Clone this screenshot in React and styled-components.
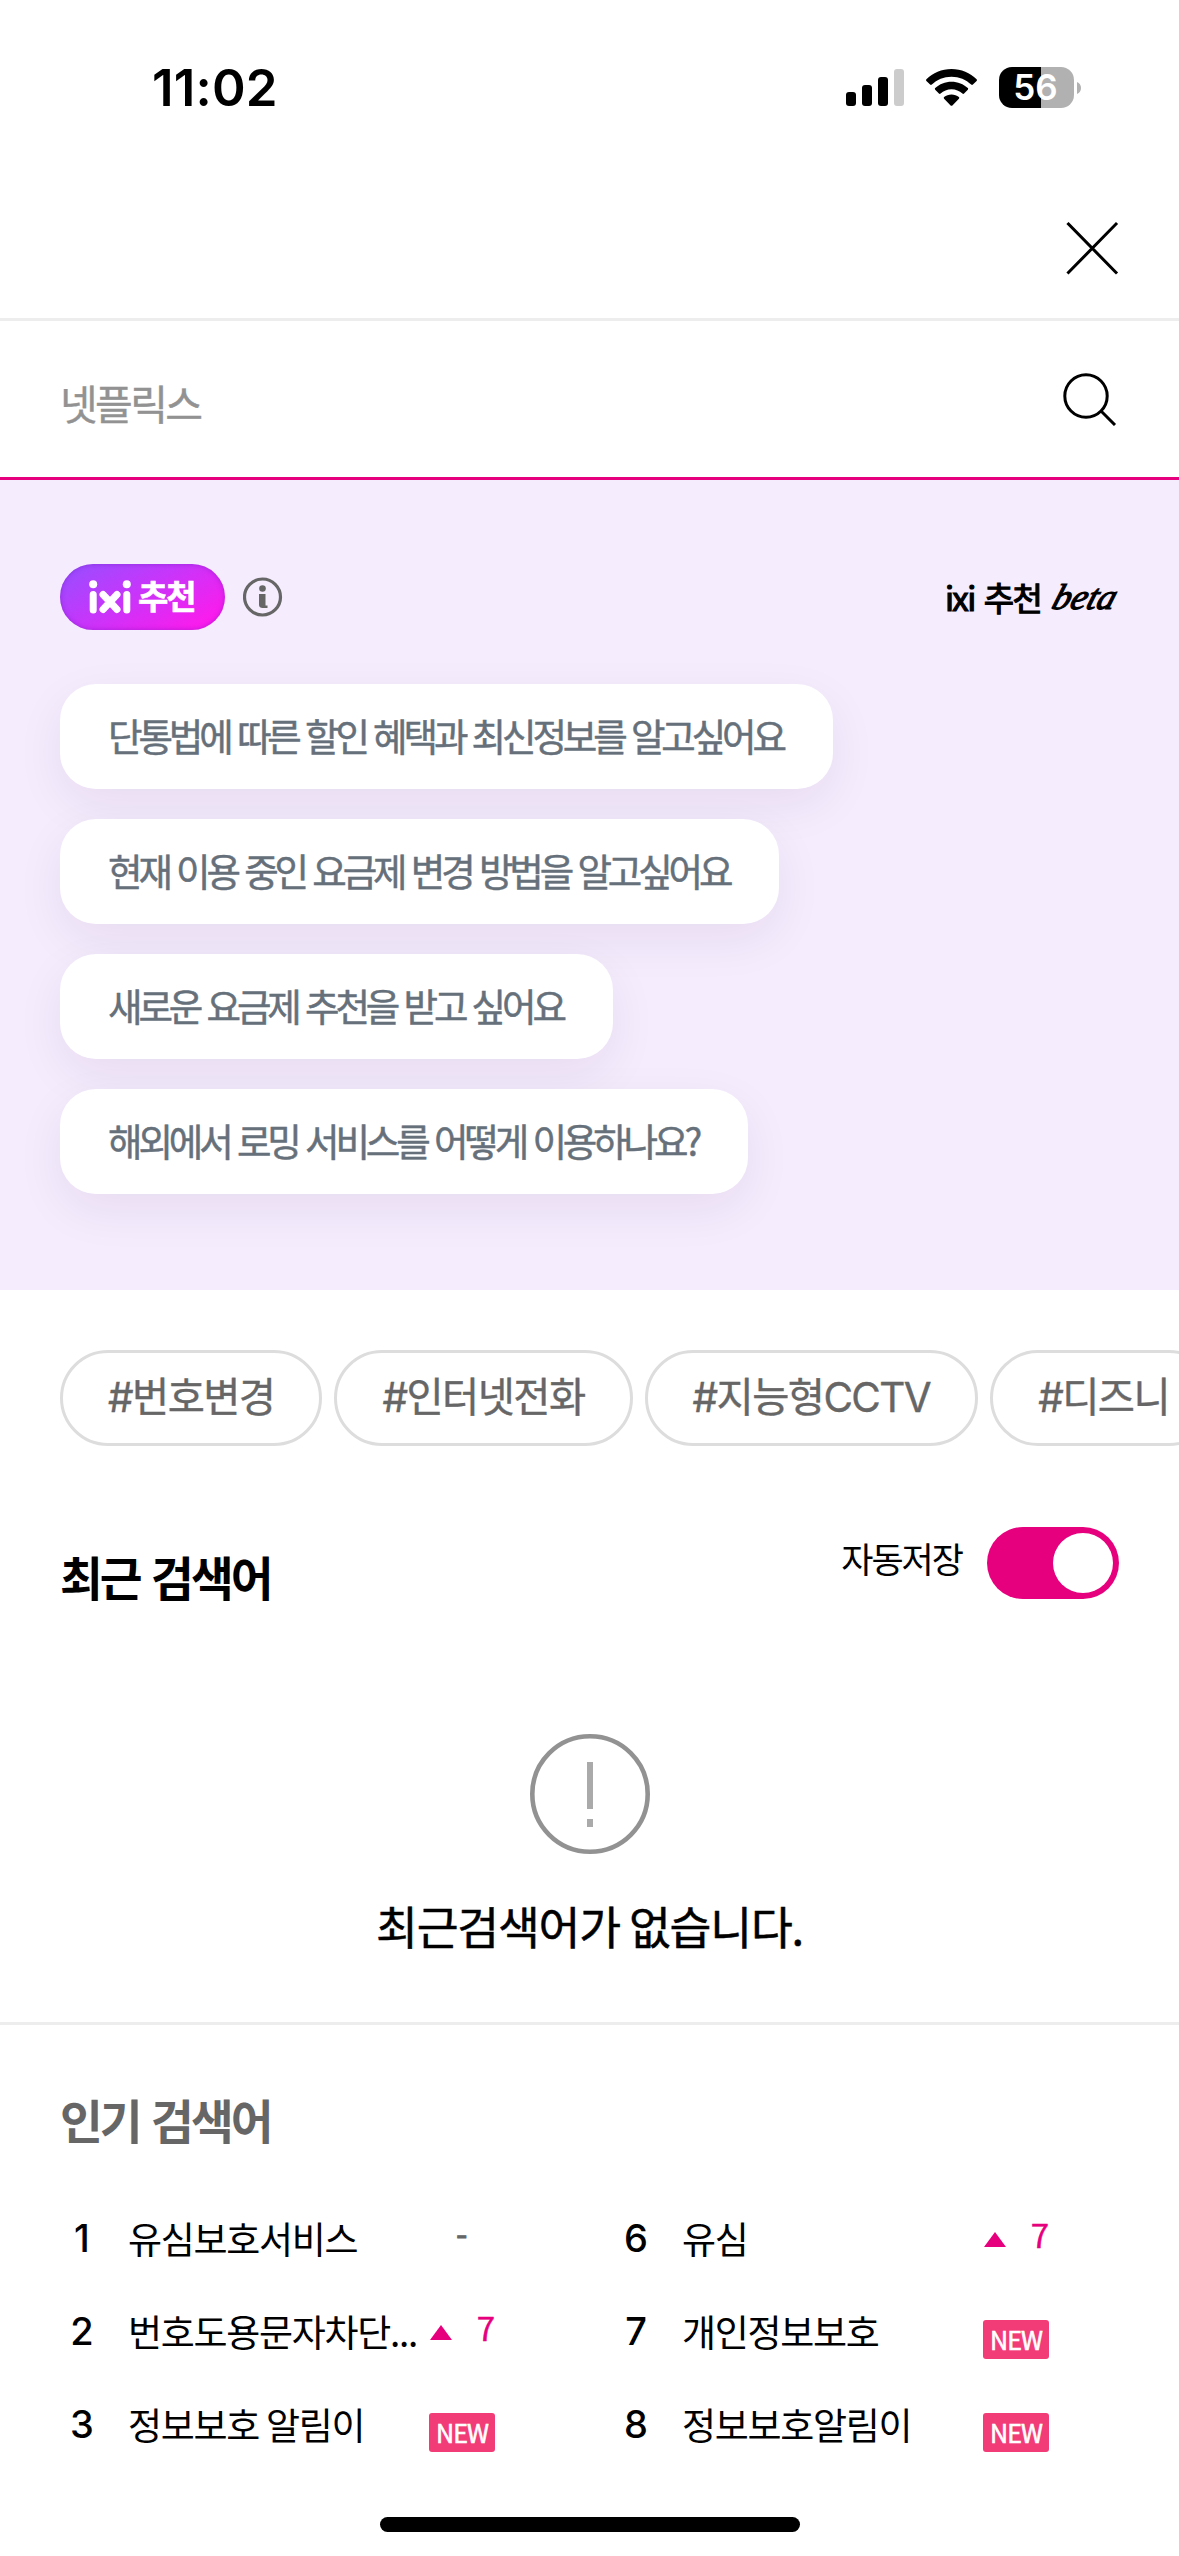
import { useState } from "react";
import styled, { createGlobalStyle } from "styled-components";

const COLORS = {
  Magenta: "#e6007e",
  Lavender: "#f5ecfe",
  Line: "#ededed",
  Grey: "#666666",
  Slate: "#66707a",
};

const questions = [
  "단통법에 따른 할인 혜택과 최신정보를 알고싶어요",
  "현재 이용 중인 요금제 변경 방법을 알고싶어요",
  "새로운 요금제 추천을 받고 싶어요",
  "해외에서 로밍 서비스를 어떻게 이용하나요?",
];

const tags = ["#번호변경", "#인터넷전화", "#지능형CCTV", "#디즈니"];

const popular = [
  { rank: 1, word: "유심보호서비스", state: "same" },
  { rank: 6, word: "유심", state: "up", step: 7 },
  { rank: 2, word: "번호도용문자차단...", state: "up", step: 7 },
  { rank: 7, word: "개인정보보호", state: "new" },
  { rank: 3, word: "정보보호 알림이", state: "new" },
  { rank: 8, word: "정보보호알림이", state: "new" },
];

const Change = ({ state, step }) => {
  if (state === "new") return <NewBadge>NEW</NewBadge>;
  if (state === "up") {
    return (
      <Up>
        <svg width="22" height="15" viewBox="0 0 22 15">
          <path d="M11 0L22 15H0z" fill={COLORS.Magenta} />
        </svg>
        <span>{step}</span>
      </Up>
    );
  }
  return <Same>-</Same>;
};

const StatusIcons = () => (
  <Icons>
    <svg width="58" height="37" viewBox="0 0 58 37">
      <rect x="0" y="23" width="10" height="14" rx="3" />
      <rect x="16" y="16" width="10" height="21" rx="3" />
      <rect x="32" y="8" width="10" height="29" rx="3" />
      <rect x="48" y="0" width="10" height="37" rx="3" fill="#cccccc" />
    </svg>
    <svg width="51" height="37" viewBox="0 0 51 37">
      <path d="M25.5 0C35.3 0 44.2 3.9 50.6 10.2c.5.5.5 1.2 0 1.7l-3.7 3.7c-.5.5-1.2.5-1.7 0C40.1 10.7 33.2 7.7 25.5 7.7S10.9 10.7 5.8 15.6c-.5.5-1.2.5-1.7 0L.4 11.9c-.5-.5-.5-1.2 0-1.7C6.8 3.9 15.7 0 25.5 0z" />
      <path d="M25.5 12.7c6.3 0 12 2.4 16.3 6.4.5.5.5 1.2 0 1.7l-3.7 3.7c-.5.5-1.2.5-1.7 0-2.9-2.6-6.7-4.2-10.9-4.2s-8 1.6-10.9 4.2c-.5.5-1.2.5-1.7 0l-3.7-3.7c-.5-.5-.5-1.2 0-1.7 4.3-4 10-6.4 16.3-6.4z" />
      <path d="M25.5 25.4c2.8 0 5.4 1 7.4 2.7.5.5.5 1.2 0 1.7l-6.5 6.6c-.5.5-1.3.5-1.8 0l-6.5-6.6c-.5-.5-.5-1.2 0-1.7 2-1.7 4.6-2.7 7.4-2.7z" />
    </svg>
    <Battery>
      <Level>56</Level>
      <svg width="4" height="12" viewBox="0 0 4 12">
        <path d="M0 0C2.5 1 4 3.3 4 6S2.5 11 0 12z" fill="#b1b1b1" />
      </svg>
    </Battery>
  </Icons>
);

const App = () => {
  const [autoSave, setAutoSave] = useState(true);

  return (
    <Screen>
      <GlobalStyle />
      <StatusBar>
        <Time>11:02</Time>
        <StatusIcons />
      </StatusBar>

      <Header>
        <IconButton aria-label="닫기">
          <svg width="54" height="54" viewBox="0 0 54 54" fill="none">
            <path d="M3.5 3L51 51.500M51 3L3.5 51.5" stroke="#000" strokeWidth="3" strokeLinecap="square" />
          </svg>
        </IconButton>
      </Header>

      <SearchBar>
        <Placeholder>넷플릭스</Placeholder>
        <IconButton aria-label="검색">
          <svg width="54" height="54" viewBox="0 0 54 54" fill="none" stroke="#000" strokeWidth="3">
            <circle cx="23" cy="24" r="21.2" />
            <path d="M38 39L52 53" />
          </svg>
        </IconButton>
      </SearchBar>

      <Recommend>
        <RecommendHead>
          <Badge>
            {/* ixi wordmark */}
            <svg width="42" height="34" viewBox="0 0 42 34" fill="#fff" stroke="#fff">
              <circle cx="4.2" cy="4.2" r="4" stroke="none" />
              <circle cx="37.8" cy="4.2" r="4" stroke="none" />
              <path d="M4.2 14.5V30M37.8 14.5V30M14 14.5L28 29.5M28 14.5L14 29.5" strokeWidth="7" strokeLinecap="round" />
            </svg>
            <span>추천</span>
          </Badge>
          <svg width="40" height="40" viewBox="0 0 40 40" fill="none">
            <circle cx="19.5" cy="20" r="18" stroke={COLORS.Grey} strokeWidth="3.2" />
            <circle cx="19.5" cy="11.5" r="3.3" fill={COLORS.Grey} />
            <path d="M16 17h6.5v11.5h2V31h-5c-2 0-3.5-1-3.5-3z" fill={COLORS.Grey} />
          </svg>
          <Beta>
            <span>ixi</span>
            <span>추천</span>
            <i>beta</i>
          </Beta>
        </RecommendHead>
        <Questions>
          {questions.map((question) => (
            <Question key={question}>{question}</Question>
          ))}
        </Questions>
      </Recommend>

      <Tags>
        {tags.map((tag) => (
          <Tag key={tag}>{tag}</Tag>
        ))}
      </Tags>

      <Recent>
        <RecentHead>
          <Title>최근 검색어</Title>
          <AutoSave>
            자동저장
            <Switch $on={autoSave} onClick={() => setAutoSave(!autoSave)} />
          </AutoSave>
        </RecentHead>
        <Empty>
          <svg width="120" height="120" viewBox="0 0 120 120" fill="none">
            <circle cx="60" cy="60" r="57.7" stroke="#929292" strokeWidth="4.6" />
            <path d="M57 28h6v47h-6zM57 85h6v8h-6z" fill="#aaaaaa" />
          </svg>
          <p>최근검색어가 없습니다.</p>
        </Empty>
      </Recent>

      <Popular>
        <Title $muted>인기 검색어</Title>
        <List>
          {popular.map(({ rank, word, state, step }) => (
            <Item key={rank}>
              <Rank>{rank}</Rank>
              <Word>{word}</Word>
              <Change state={state} step={step} />
            </Item>
          ))}
        </List>
      </Popular>

      <HomeBar />
    </Screen>
  );
};

export default App;

const GlobalStyle = createGlobalStyle`
  * {
    box-sizing: border-box;
  }

  body {
    margin: 0;
    background: #fff;
    overflow: hidden;
  }

  svg {
    display: block;
    flex-shrink: 0;
  }
`;

const Screen = styled.main`
  display: flex;
  flex-direction: column;
  width: 1179px;
  height: 2556px;
  overflow: hidden;
  background: #fff;
  color: #000;
  font-family: "Noto Sans CJK KR", sans-serif;
  white-space: nowrap;
`;

const StatusBar = styled.div`
  display: flex;
  justify-content: space-between;
  height: 178px;
  padding: 67px 98px 0 152px;
`;

const Time = styled.div`
  font: 600 51px/42px "Inter", sans-serif;
  letter-spacing: 0.2px;
`;

const Icons = styled.div`
  display: flex;
  align-items: center;
  gap: 22px;
  height: 41px;
`;

const Battery = styled.div`
  display: flex;
  align-items: center;
  gap: 3px;
`;

const Level = styled.div`
  width: 75px;
  height: 41px;
  padding-right: 2px;
  border-radius: 13px;
  background: linear-gradient(90deg, #000 56%, #b1b1b1 56%);
  color: #fff;
  font: 600 35px/41px "Inter", sans-serif;
  text-align: center;
`;

const Header = styled.header`
  display: flex;
  justify-content: flex-end;
  height: 143px;
  padding: 43px 60px 0;
  border-bottom: 3px solid ${COLORS.Line};
`;

const IconButton = styled.button`
  padding: 0;
  border: 0;
  background: none;
  height: 54px;
`;

const SearchBar = styled.div`
  display: flex;
  justify-content: space-between;
  height: 159px;
  padding: 51px 62px 0 60px;
  border-bottom: 3px solid ${COLORS.Magenta};
`;

const Placeholder = styled.div`
  color: #929292;
  font-size: 41px;
  line-height: 61px;
  letter-spacing: -2.6px;
  -webkit-text-stroke: 0.4px #929292;
`;

const Recommend = styled.section`
  height: 810px;
  padding: 84px 60px 0;
  background: ${COLORS.Lavender};
`;

const RecommendHead = styled.div`
  display: flex;
  align-items: center;
  gap: 18px;
  height: 66px;
`;

const Badge = styled.div`
  display: flex;
  align-items: center;
  gap: 7px;
  width: 165px;
  height: 66px;
  padding-left: 29px;
  border-radius: 33px;
  background: linear-gradient(150deg, #9a4dff 5%, #c437fb 42%, #fb1ced 88%);
  box-shadow: inset 0 0 5px rgba(110, 20, 190, 0.5);
  color: #fff;
  font-size: 33px;
  font-weight: 700;
  line-height: 62px;
  letter-spacing: -2.2px;
  -webkit-text-stroke: 0.6px #fff;

  span {
    height: 66px;
  }
`;

const Beta = styled.div`
  display: flex;
  gap: 9px;
  margin-left: auto;
  font-size: 33px;
  line-height: 63px;
  letter-spacing: -1.6px;
  -webkit-text-stroke: 1.2px #000;

  i {
    margin: 0 2px 0 4px;
    font-family: "Liberation Serif", serif;
    font-weight: 400;
    font-size: 36px;
    letter-spacing: 0.2px;
    transform: skewX(-18deg);
  }
`;

const Questions = styled.div`
  display: flex;
  flex-direction: column;
  align-items: flex-start;
  gap: 30px;
  margin-top: 54px;
`;

const Question = styled.div`
  height: 105px;
  padding: 0 50px 0 48px;
  border-radius: 36px;
  background: #fff;
  box-shadow: 0 16px 48px rgba(60, 20, 60, 0.07);
  color: ${COLORS.Slate};
  font-size: 37.5px;
  line-height: 101px;
  letter-spacing: -4.1px;
  word-spacing: 3px;
  -webkit-text-stroke: 0.5px ${COLORS.Slate};
`;

const Tags = styled.div`
  display: flex;
  gap: 12px;
  padding: 60px 0 0 60px;
  height: 156px;
`;

const Tag = styled.div`
  flex-shrink: 0;
  height: 96px;
  padding: 0 45px;
  border: 3px solid #dddddd;
  border-radius: 48px;
  color: ${COLORS.Grey};
  font-family: "Inter", "Noto Sans CJK KR", sans-serif;
  font-size: 40.4px;
  line-height: 90px;
  letter-spacing: -1.55px;
  -webkit-text-stroke: 0.4px ${COLORS.Grey};
`;

const Recent = styled.section`
  height: 579px;
  padding: 81px 60px 0;
  border-bottom: 3px solid ${COLORS.Line};
`;

const RecentHead = styled.div`
  display: flex;
  justify-content: space-between;
  height: 207px;
`;

const Title = styled.h2`
  margin: ${({ $muted }) => ($muted ? "0" : "16px 0 0")};
  color: ${({ $muted }) => ($muted ? COLORS.Grey : "#000")};
  font-size: 46.5px;
  font-weight: 700;
  line-height: 66px;
  letter-spacing: -3px;
  word-spacing: 4px;
`;

const AutoSave = styled.label`
  display: flex;
  gap: 25px;
  font-size: 35px;
  line-height: 62px;
  letter-spacing: -2px;
`;

const Switch = styled.button`
  width: 132px;
  height: 72px;
  padding: 6px;
  border: 0;
  border-radius: 36px;
  background: ${({ $on }) => ($on ? COLORS.Magenta : "#cccccc")};

  &::after {
    content: "";
    display: block;
    width: 60px;
    height: 60px;
    margin-left: ${({ $on }) => ($on ? "auto" : "0")};
    border-radius: 50%;
    background: #fff;
  }
`;

const Empty = styled.div`
  display: flex;
  flex-direction: column;
  align-items: center;

  p {
    margin: 37px 0 0;
    font-size: 45.5px;
    line-height: 68px;
    letter-spacing: -1.2px;
    -webkit-text-stroke: 0.5px #000;
  }
`;

const Popular = styled.section`
  padding: 61px 60px 0;
`;

const List = styled.ol`
  display: grid;
  grid-template-columns: 435px 435px;
  grid-auto-rows: 93px;
  column-gap: 119px;
  margin: 40px 0 0;
  padding: 0;
  list-style: none;
`;

const Item = styled.li`
  display: flex;
  height: 93px;
  line-height: 93px;
`;

const Rank = styled.span`
  width: 44px;
  font-family: "Inter", sans-serif;
  font-size: 38px;
  font-weight: 500;
  text-align: center;
`;

const Word = styled.span`
  flex: 1;
  min-width: 0;
  margin-left: 24px;
  font-size: 37px;
  line-height: 92px;
  letter-spacing: -1.3px;
`;

const Up = styled.span`
  display: flex;
  justify-content: space-between;
  align-items: center;
  width: 66px;
  padding: 1px 0 0 1px;
  color: ${COLORS.Magenta};
  font-size: 33px;
  line-height: 80px;
  -webkit-text-stroke: 0.4px ${COLORS.Magenta};

  span {
    margin-top: -11px;
  }
`;

const Same = styled.span`
  width: 66px;
  padding-left: 27px;
  color: ${COLORS.Grey};
  font-size: 33px;
  line-height: 80px;
  -webkit-text-stroke: 0.8px ${COLORS.Grey};
`;

const NewBadge = styled.span`
  width: 66px;
  height: 39px;
  margin-top: 35px;
  border-radius: 3px;
  background: #f23c78;
  color: #fff;
  font: 400 25px/38px "Noto Sans CJK KR", sans-serif;
  letter-spacing: -0.9px;
  text-align: center;
  -webkit-text-stroke: 0.6px #fff;
`;

const HomeBar = styled.div`
  flex-shrink: 0;
  width: 420px;
  height: 15px;
  margin: auto auto 24px;
  border-radius: 8px;
  background: #000;
`;
